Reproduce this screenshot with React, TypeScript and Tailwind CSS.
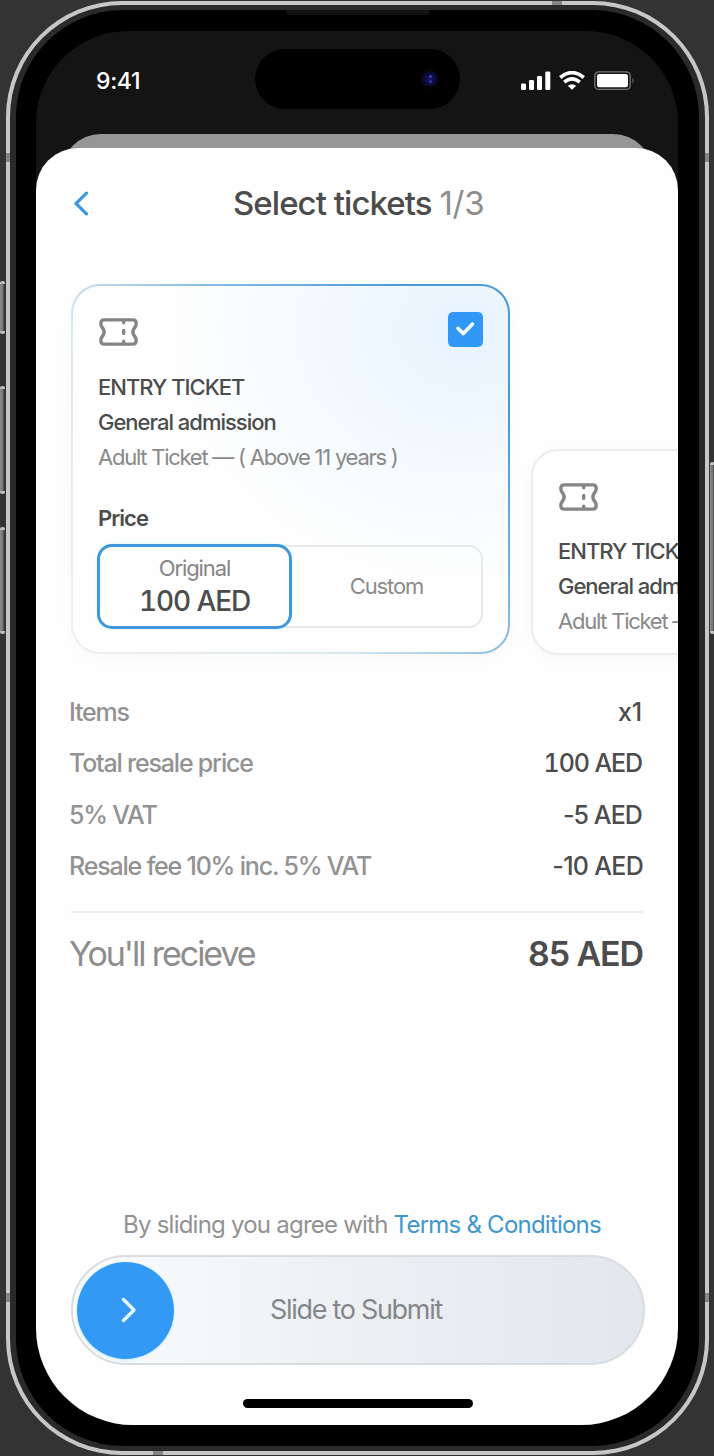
import React from "react";

function TicketIcon() {
  return (
    <svg width="39" height="28" viewBox="0 0 39 28" fill="none" stroke="#858585" strokeWidth="3.4" strokeLinecap="round" strokeLinejoin="round" className="block shrink-0">
      <path d="M5 1.9H34C36 1.9 37.1 3 37.1 5V6.6C37.1 7.8 36.6 8.4 35.8 9.4C33.3 12.4 33.3 15.6 35.8 18.6C36.6 19.6 37.1 20.2 37.1 21.4V23C37.1 25 36 26.1 34 26.1H5C3 26.1 1.9 25 1.9 23V21.4C1.9 20.2 2.4 19.6 3.2 18.6C5.7 15.6 5.7 12.4 3.2 9.4C2.4 8.4 1.9 7.8 1.9 6.6V5C1.9 3 3 1.9 5 1.9Z" />
      <path d="M24.7 2.5V4.8M24.7 12.4V15.4M24.7 23.2V25.5" />
    </svg>
  );
}

function TicketInfo() {
  return (
    <div className="mt-[23px] whitespace-nowrap text-[22px] leading-[35px]">
      <p className="font-medium tracking-[-1px]">ENTRY TICKET</p>
      <p className="font-medium tracking-[-1px]">General admission</p>
      <p className="tracking-[-1.25px] text-[#898989]">Adult Ticket — ( Above 11 years )</p>
    </div>
  );
}

function Row({ label, value, valueClass }: { label: string; value: string; valueClass: string }) {
  return (
    <div className="flex h-[51.4px] items-center justify-between text-[25px] font-medium">
      <span className="tracking-[-1.2px] text-[#929292]">{label}</span>
      <span className={valueClass}>{value}</span>
    </div>
  );
}

function StatusIcons() {
  return (
    <svg width="116" height="22" viewBox="0 0 116 22" className="mt-px block">
      <g fill="#fff">
        <rect x="1" y="12.5" width="5" height="6.5" rx="1.3" />
        <rect x="9" y="9" width="5" height="10" rx="1.3" />
        <rect x="17" y="5" width="5" height="14" rx="1.3" />
        <rect x="25.3" y="0.5" width="5" height="18.5" rx="1.3" />
        <path d="M52 18.8L47.8 14.8Q52 11.5 56.2 14.8Z" />
      </g>
      <g fill="none" stroke="#fff" strokeWidth="3.6">
        <path d="M40.2 6.5Q52 -3.3 63.8 6.5" />
        <path d="M44.2 11.1Q52 4.5 59.8 11.1" />
      </g>
      <rect x="74.8" y="0.8" width="35.4" height="17.6" rx="4" fill="none" stroke="#777" strokeWidth="1.3" />
      <rect x="77" y="3" width="31" height="13.2" rx="2.2" fill="#fff" />
      <path d="M112.3 7C114.1 7.8 114.1 11.5 112.3 12.3Z" fill="#666" />
    </svg>
  );
}

function SideButton({ className }: { className: string }) {
  return (
    <div className={`absolute w-[5px] rounded-[2px] border-y-[3px] border-[#bdbdbd] bg-linear-to-r from-[#8b8b8b] via-[#777] to-[#292929] ${className}`} />
  );
}

function Band({ className }: { className: string }) {
  return <div className={`absolute bg-[#858585] ${className}`} />;
}

export default function App() {
  return (
    <div className="relative h-[1456px] w-[714px] overflow-hidden bg-[#333] pl-[6px] pt-px font-['Inter','Liberation_Sans',sans-serif] text-[#4c4c4c]">
      <SideButton className="left-0 top-[281px] h-[53px]" />
      <SideButton className="left-0 top-[386px] h-[108px]" />
      <SideButton className="left-0 top-[527px] h-[107px]" />
      <SideButton className="left-[710px] top-[462px] h-[172px]" />

      <div className="relative h-[1454px] w-[703px] rounded-[116px] bg-[#c9c7c6] p-[4px]">
        <Band className="left-0 top-[152px] h-[9px] w-[5px]" />
        <Band className="right-0 top-[152px] h-[9px] w-[5px]" />
        <Band className="left-0 top-[1292px] h-[9px] w-[5px]" />
        <Band className="right-0 top-[1292px] h-[9px] w-[5px]" />
        <Band className="left-[546px] top-0 h-[5px] w-[10px]" />
        <Band className="bottom-0 left-[147px] h-[5px] w-[10px]" />
        <div className="relative h-[1446px] rounded-[112px] bg-[#2a2a2a] px-[6px] py-[5px]">
          <div className="relative h-[1436px] rounded-[107px] bg-black pl-[20px] pt-[21px]">
            <div className="absolute left-[270px] top-0 h-[5px] w-[144px] rounded-b-[4px] bg-[#131311]" />
            <div className="relative flex h-[1394px] w-[642px] flex-col overflow-hidden rounded-t-[92px] rounded-b-[97px] bg-[#141414]">
              <div className="relative flex h-[103px] shrink-0 items-start justify-between pl-[60px] pr-[42px] pt-[39px]">
                <span className="text-[23px] font-medium leading-[23px] tracking-[-0.3px] text-white">9:41</span>
                <StatusIcons />
                <div className="absolute left-[219px] top-[18px] flex h-[60px] w-[205px] items-center justify-end rounded-full bg-black pr-[22px]">
                  <div className="flex size-[16px] flex-col items-center justify-center gap-[2px] rounded-full bg-radial from-[#15156a] to-[#03030c] shadow-[0_0_8px_#140810]">
                    <i className="size-[3px] rounded-full bg-[#3d3dc0]" />
                    <i className="size-[3px] rounded-full bg-[#3434a8]" />
                  </div>
                </div>
              </div>
              <div className="mx-[25px] h-[60px] shrink-0 rounded-t-[40px] bg-[#969696]" />

              <main className="relative -mt-[46px] flex h-[1277px] shrink-0 flex-col rounded-t-[42px] bg-[#fefefe]">
                <header className="flex h-[111px] items-center">
                  <svg width="16" height="26" viewBox="0 0 16 26" fill="none" stroke="#3f99e0" strokeWidth="3.2" strokeLinecap="round" strokeLinejoin="round" className="ml-[37px]">
                    <path d="M13.5 2.1L3 12.5L13.5 22.9" />
                  </svg>
                  <h1 className="ml-[144px] whitespace-nowrap text-[33px] font-medium tracking-[-0.95px]">
                    Select tickets <span className="font-normal tracking-[-0.3px] text-[#8d8d8d]">1/3</span>
                  </h1>
                </header>

                <section className="mt-[25px] flex items-end gap-[21px] pl-[35px]">
                  <article className="flex h-[370px] w-[439px] shrink-0 flex-col rounded-[29px] border-2 border-transparent px-[25px] pt-[26px] shadow-[0_4px_16px_rgba(0,0,0,0.025)] [background:radial-gradient(ellipse_290px_250px_at_90%_12%,#e7f3fe_0%,#f1f9fe_45%,#fefefe_100%)_padding-box,linear-gradient(50deg,#eceef0_8%,#dbe9ef_36%,#8cbfe2_58%,#4b9ad8_85%)_border-box]">
                    <div className="flex items-start justify-between">
                      <div className="ml-px mt-[6px]"><TicketIcon /></div>
                      <div className="flex size-[35px] items-center justify-center rounded-[5px] bg-[#3199f5]">
                        <svg width="23" height="20" viewBox="0 0 23 20" fill="none" stroke="#f4feff" strokeWidth="3.6" strokeLinecap="round" strokeLinejoin="round">
                          <path d="M4 8.3L9.4 13.6L18.5 4" />
                        </svg>
                      </div>
                    </div>
                    <TicketInfo />
                    <p className="mt-[26px] text-[22px] font-semibold leading-[35px] tracking-[-0.95px]">Price</p>
                    <div className="relative -ml-px mt-[8px] flex h-[85px] w-[387px]">
                      <div className="absolute inset-px rounded-[14px] border-2 border-[#e8e9ea]" />
                      <div className="relative flex w-[195px] flex-col items-center rounded-[15px] border-[3px] border-[#4197db] bg-[#fefefe] pt-[6px] shadow-[0_0_3px_#d5f7ff]">
                        <span className="text-[22px] leading-[30px] tracking-[-1.1px] text-[#858585]">Original</span>
                        <span className="text-[28px] font-medium tabular-nums leading-[36px] tracking-[-1.1px]">100 AED</span>
                      </div>
                      <div className="flex flex-1 items-center justify-center pr-[3px] text-[22px] tracking-[-1.1px] text-[#8b8b8b]">Custom</div>
                    </div>
                  </article>
                  <article className="h-[206px] w-[439px] shrink-0 translate-y-px rounded-[27px] border-2 border-[#ededed] bg-[#fefefe] pl-[25px] pt-[32px] shadow-[0_4px_14px_rgba(0,0,0,0.03)]">
                    <div className="ml-px mb-[23px]"><TicketIcon /></div>
                    <TicketInfo />
                  </article>
                </section>

                <section className="mt-[33px] pl-[33px] pr-[35px]">
                  <Row label="Items" value="x1" valueClass="tracking-[-0.2px] pr-px" />
                  <Row label="Total resale price" value="100 AED" valueClass="tabular-nums tracking-[-1.1px] pr-px" />
                  <Row label="5% VAT" value="-5 AED" valueClass="tracking-[-0.9px] pr-px" />
                  <Row label="Resale fee 10% inc. 5% VAT" value="-10 AED" valueClass="tracking-[-0.7px]" />
                  <div className="ml-[2px] mt-[18px] h-[2px] bg-[#ededed]" />
                  <div className="flex h-[82px] items-center justify-between text-[34px]">
                    <span className="tracking-[-2.05px] text-[#8d8d8d]">You'll recieve</span>
                    <span className="font-semibold tracking-[-1.1px]">85 AED</span>
                  </div>
                </section>

                <footer className="mt-auto flex flex-col items-center pb-[17px] pl-[2px]">
                  <p className="ml-[8px] whitespace-nowrap text-[24px] leading-[30px] tracking-[-0.77px] text-[#929292]">
                    By sliding you agree with <a className="text-[#4096cf]">Terms &amp; Conditions</a>
                  </p>
                  <div className="mt-[15px] flex h-[110px] w-[574px] items-center rounded-full border-2 border-[#d9dde0] bg-linear-to-r from-[#fafbfc] via-[#edf0f3] to-[#e2e7ee] pl-[4px]">
                    <div className="flex size-[97px] shrink-0 items-center justify-center rounded-full bg-[#329af5] shadow-[0_1px_3px_#c5eaff]">
                      <svg width="18" height="28" viewBox="0 0 18 28" fill="none" stroke="#eafaff" strokeWidth="3.4" strokeLinecap="round" strokeLinejoin="round" className="ml-[6px]">
                        <path d="M3.5 3.5L14 14L3.5 24.5" />
                      </svg>
                    </div>
                    <span className="ml-[96px] whitespace-nowrap text-[27px] tracking-[-1.3px] text-[#858688]">Slide to Submit</span>
                  </div>
                  <div className="mt-[34px] h-[9px] w-[230px] rounded-full bg-black" />
                </footer>
              </main>
            </div>
          </div>
        </div>
      </div>
    </div>
  );
}
